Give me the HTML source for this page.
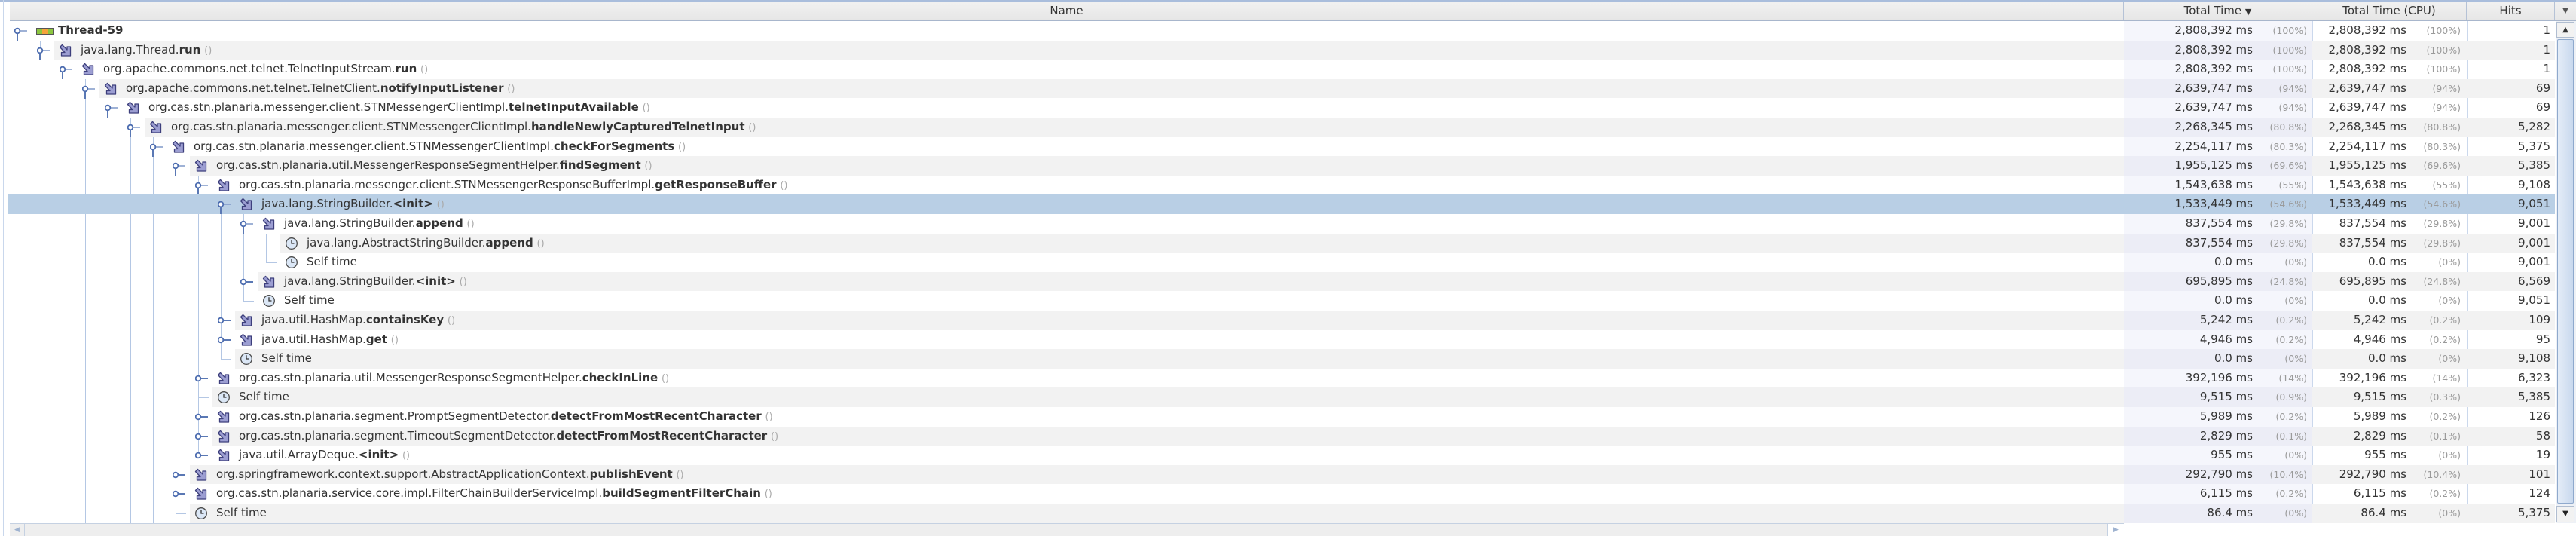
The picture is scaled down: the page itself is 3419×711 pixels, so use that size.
<!DOCTYPE html>
<html><head><meta charset="utf-8">
<style>
*{margin:0;padding:0;box-sizing:border-box}
html,body{width:3419px;height:711px;overflow:hidden;background:#fff;font-family:"DejaVu Sans","Liberation Sans",sans-serif;color:#333}
#top{position:absolute;left:0;top:0;width:3419px;height:2px;background:#a9bddc}
#lb{position:absolute;left:4px;top:0;width:1px;height:711px;background:#c9d7ec}
#hd{position:absolute;left:13px;top:2px;width:3406px;height:26px;background:linear-gradient(#f1f1f1,#e6e6e6);border-bottom:1px solid #a8b6cc;font-size:15px;color:#333}
#hd div{position:absolute;top:0;height:25px;line-height:25px;text-align:center;border-right:1px solid #b5c2d6}
.r{position:absolute;left:0;width:3392px;height:25.6px;line-height:25.6px;font-size:15px}
.r .bg{position:absolute;top:0;height:100%;right:573px}
.o .bg{background:#f2f2f2}
.c1,.c2,.c3{position:absolute;top:0;height:100%}
.c1{left:2819px;width:250px;background:#f5f6fc}
.c2{left:3069px;width:205px}
.c3{left:3274px;width:117px;text-align:right;padding-right:6px}
.o .c1{background:#ecedf6}
.o .c2,.o .c3{background:#f2f2f2}
.sel,.sel .c1,.sel .c2,.sel .c3{background:#b9cfe5!important}
.v{position:absolute;right:79px}
.c2 .v{right:80px}
.p{position:absolute;right:7px;font-size:12.5px;color:#9a9a9a}
.c2 .p{right:8px}
.ex{position:absolute;top:0;width:20px;height:26px}
.ic{position:absolute;top:4px;width:18px;height:18px}
.t{position:absolute;top:0;white-space:nowrap}
.t i{font-style:normal;color:#aaa;font-size:13px}
.vl{position:absolute;width:1px;background:#b4c7e4}
.hl{position:absolute;height:1px;background:#b4c7e4}
.cs{position:absolute;top:28px;height:665px;width:1px;background:#cbd8ec}
</style></head><body>
<svg width="0" height="0" style="position:absolute">
<defs>
<symbol id="eo" viewBox="0 0 20 26"><line x1="7" y1="13" x2="17" y2="13" stroke="#7f98c8" stroke-width="1.5"/><line x1="4" y1="16" x2="4" y2="26" stroke="#5a78b4" stroke-width="2"/><circle cx="4" cy="13" r="3.3" fill="#fff" stroke="#4d6db0" stroke-width="1.8"/></symbol>
<symbol id="ec" viewBox="0 0 20 26"><line x1="7" y1="13" x2="17" y2="13" stroke="#5a78b4" stroke-width="2"/><circle cx="4" cy="13" r="3.3" fill="#fff" stroke="#4d6db0" stroke-width="1.8"/></symbol>
<symbol id="mi" viewBox="0 0 18 18"><path d="M1.5 4.5 L4.5 1.5 L11 8 L11 4 L15.5 4 L15.5 16 L3.5 16 L3.5 11.5 L8 11.5 Z" fill="#9c9ed2" stroke="#3d3f7c" stroke-width="1.3" stroke-linejoin="round"/></symbol>
<symbol id="ck" viewBox="0 0 18 18"><circle cx="9" cy="9" r="7.3" fill="#dbe7f6" stroke="#4a4a4a" stroke-width="1.3"/><path d="M9 4.2 V9 H12.5" fill="none" stroke="#333" stroke-width="1.3"/></symbol>
</defs></svg>
<div id="top"></div><div id="lb"></div>
<div id="hd">
<div style="left:0;width:2806px">Name</div>
<div style="left:2806px;width:250px">Total Time <span style="font-size:11px">▼</span></div>
<div style="left:3056px;width:205px">Total Time (CPU)</div>
<div style="left:3261px;width:117px">Hits</div>
<div style="left:3378px;width:28px;border-right:none;font-size:10px;color:#555">▼</div>
</div>

<!-- tree lines -->
<div class="vl" style="left:53px;top:54px;height:13px"></div>
<div class="vl" style="left:83px;top:80px;height:614px"></div>
<div class="vl" style="left:113px;top:105px;height:589px"></div>
<div class="vl" style="left:143px;top:131px;height:563px"></div>
<div class="vl" style="left:173px;top:156px;height:538px"></div>
<div class="vl" style="left:203px;top:182px;height:512px"></div>
<div class="vl" style="left:233px;top:207px;height:474px"></div>
<div class="vl" style="left:263px;top:233px;height:371px"></div>
<div class="vl" style="left:293px;top:258px;height:218px"></div>
<div class="vl" style="left:323px;top:284px;height:115px"></div>
<div class="vl" style="left:353px;top:310px;height:38px"></div>
<div class="hl" style="left:353px;top:322px;width:14px"></div>
<div class="hl" style="left:353px;top:348px;width:14px"></div>
<div class="hl" style="left:323px;top:399px;width:14px"></div>
<div class="hl" style="left:293px;top:476px;width:14px"></div>
<div class="hl" style="left:263px;top:527px;width:14px"></div>
<div class="hl" style="left:233px;top:681px;width:14px"></div>

<div class="cs" style="left:2819px"></div>
<div class="cs" style="left:3069px"></div>
<div class="cs" style="left:3274px"></div>

<!-- rows -->
<div class="r" style="top:28px"><svg class="ex" style="left:19px"><use href="#eo"/></svg><svg class="ic" style="left:48px;top:9px;width:24px;height:9px" viewBox="0 0 24 9"><rect x="0.5" y="0.5" width="23" height="8" fill="#8cc63f" stroke="#555"/><rect x="8" y="1" width="8" height="7" fill="#f5a33a"/></svg><span class="t" style="left:77px"><b>Thread-59</b></span><div class="c1"><span class="v">2,808,392 ms</span><span class="p">(100%)</span></div><div class="c2"><span class="v">2,808,392 ms</span><span class="p">(100%)</span></div><div class="c3">1</div></div>

<div class="r o" style="top:53.6px"><div class="bg" style="left:72px"></div><svg class="ex" style="left:49px"><use href="#eo"/></svg><svg class="ic" style="left:78px"><use href="#mi"/></svg><span class="t" style="left:107px">java.lang.Thread.<b>run</b> <i>()</i></span><div class="c1"><span class="v">2,808,392 ms</span><span class="p">(100%)</span></div><div class="c2"><span class="v">2,808,392 ms</span><span class="p">(100%)</span></div><div class="c3">1</div></div>

<div class="r" style="top:79.2px"><svg class="ex" style="left:79px"><use href="#eo"/></svg><svg class="ic" style="left:108px"><use href="#mi"/></svg><span class="t" style="left:137px">org.apache.commons.net.telnet.TelnetInputStream.<b>run</b> <i>()</i></span><div class="c1"><span class="v">2,808,392 ms</span><span class="p">(100%)</span></div><div class="c2"><span class="v">2,808,392 ms</span><span class="p">(100%)</span></div><div class="c3">1</div></div>

<div class="r o" style="top:104.8px"><div class="bg" style="left:132px"></div><svg class="ex" style="left:109px"><use href="#eo"/></svg><svg class="ic" style="left:138px"><use href="#mi"/></svg><span class="t" style="left:167px">org.apache.commons.net.telnet.TelnetClient.<b>notifyInputListener</b> <i>()</i></span><div class="c1"><span class="v">2,639,747 ms</span><span class="p">(94%)</span></div><div class="c2"><span class="v">2,639,747 ms</span><span class="p">(94%)</span></div><div class="c3">69</div></div>

<div class="r" style="top:130.4px"><svg class="ex" style="left:139px"><use href="#eo"/></svg><svg class="ic" style="left:168px"><use href="#mi"/></svg><span class="t" style="left:197px">org.cas.stn.planaria.messenger.client.STNMessengerClientImpl.<b>telnetInputAvailable</b> <i>()</i></span><div class="c1"><span class="v">2,639,747 ms</span><span class="p">(94%)</span></div><div class="c2"><span class="v">2,639,747 ms</span><span class="p">(94%)</span></div><div class="c3">69</div></div>

<div class="r o" style="top:156px"><div class="bg" style="left:192px"></div><svg class="ex" style="left:169px"><use href="#eo"/></svg><svg class="ic" style="left:198px"><use href="#mi"/></svg><span class="t" style="left:227px">org.cas.stn.planaria.messenger.client.STNMessengerClientImpl.<b>handleNewlyCapturedTelnetInput</b> <i>()</i></span><div class="c1"><span class="v">2,268,345 ms</span><span class="p">(80.8%)</span></div><div class="c2"><span class="v">2,268,345 ms</span><span class="p">(80.8%)</span></div><div class="c3">5,282</div></div>

<div class="r" style="top:181.6px"><svg class="ex" style="left:199px"><use href="#eo"/></svg><svg class="ic" style="left:228px"><use href="#mi"/></svg><span class="t" style="left:257px">org.cas.stn.planaria.messenger.client.STNMessengerClientImpl.<b>checkForSegments</b> <i>()</i></span><div class="c1"><span class="v">2,254,117 ms</span><span class="p">(80.3%)</span></div><div class="c2"><span class="v">2,254,117 ms</span><span class="p">(80.3%)</span></div><div class="c3">5,375</div></div>

<div class="r o" style="top:207.2px"><div class="bg" style="left:252px"></div><svg class="ex" style="left:229px"><use href="#eo"/></svg><svg class="ic" style="left:258px"><use href="#mi"/></svg><span class="t" style="left:287px">org.cas.stn.planaria.util.MessengerResponseSegmentHelper.<b>findSegment</b> <i>()</i></span><div class="c1"><span class="v">1,955,125 ms</span><span class="p">(69.6%)</span></div><div class="c2"><span class="v">1,955,125 ms</span><span class="p">(69.6%)</span></div><div class="c3">5,385</div></div>

<div class="r" style="top:232.8px"><svg class="ex" style="left:259px"><use href="#eo"/></svg><svg class="ic" style="left:288px"><use href="#mi"/></svg><span class="t" style="left:317px">org.cas.stn.planaria.messenger.client.STNMessengerResponseBufferImpl.<b>getResponseBuffer</b> <i>()</i></span><div class="c1"><span class="v">1,543,638 ms</span><span class="p">(55%)</span></div><div class="c2"><span class="v">1,543,638 ms</span><span class="p">(55%)</span></div><div class="c3">9,108</div></div>

<div class="r sel" style="top:258.4px;left:11px;width:3380px"><svg class="ex" style="left:278px"><use href="#eo"/></svg><svg class="ic" style="left:307px"><use href="#mi"/></svg><span class="t" style="left:336px">java.lang.StringBuilder.<b>&lt;init&gt;</b> <i>()</i></span><div class="c1" style="left:2808px"><span class="v">1,533,449 ms</span><span class="p">(54.6%)</span></div><div class="c2" style="left:3058px"><span class="v">1,533,449 ms</span><span class="p">(54.6%)</span></div><div class="c3" style="left:3263px">9,051</div></div>

<div class="r" style="top:284px"><svg class="ex" style="left:319px"><use href="#eo"/></svg><svg class="ic" style="left:348px"><use href="#mi"/></svg><span class="t" style="left:377px">java.lang.StringBuilder.<b>append</b> <i>()</i></span><div class="c1"><span class="v">837,554 ms</span><span class="p">(29.8%)</span></div><div class="c2"><span class="v">837,554 ms</span><span class="p">(29.8%)</span></div><div class="c3">9,001</div></div>

<div class="r o" style="top:309.6px"><div class="bg" style="left:372px"></div><svg class="ic" style="left:378px"><use href="#ck"/></svg><span class="t" style="left:407px">java.lang.AbstractStringBuilder.<b>append</b> <i>()</i></span><div class="c1"><span class="v">837,554 ms</span><span class="p">(29.8%)</span></div><div class="c2"><span class="v">837,554 ms</span><span class="p">(29.8%)</span></div><div class="c3">9,001</div></div>

<div class="r" style="top:335.2px"><svg class="ic" style="left:378px"><use href="#ck"/></svg><span class="t" style="left:407px">Self time</span><div class="c1"><span class="v">0.0 ms</span><span class="p">(0%)</span></div><div class="c2"><span class="v">0.0 ms</span><span class="p">(0%)</span></div><div class="c3">9,001</div></div>

<div class="r o" style="top:360.8px"><div class="bg" style="left:342px"></div><svg class="ex" style="left:319px"><use href="#ec"/></svg><svg class="ic" style="left:348px"><use href="#mi"/></svg><span class="t" style="left:377px">java.lang.StringBuilder.<b>&lt;init&gt;</b> <i>()</i></span><div class="c1"><span class="v">695,895 ms</span><span class="p">(24.8%)</span></div><div class="c2"><span class="v">695,895 ms</span><span class="p">(24.8%)</span></div><div class="c3">6,569</div></div>

<div class="r" style="top:386.4px"><svg class="ic" style="left:348px"><use href="#ck"/></svg><span class="t" style="left:377px">Self time</span><div class="c1"><span class="v">0.0 ms</span><span class="p">(0%)</span></div><div class="c2"><span class="v">0.0 ms</span><span class="p">(0%)</span></div><div class="c3">9,051</div></div>

<div class="r o" style="top:412px"><div class="bg" style="left:312px"></div><svg class="ex" style="left:289px"><use href="#ec"/></svg><svg class="ic" style="left:318px"><use href="#mi"/></svg><span class="t" style="left:347px">java.util.HashMap.<b>containsKey</b> <i>()</i></span><div class="c1"><span class="v">5,242 ms</span><span class="p">(0.2%)</span></div><div class="c2"><span class="v">5,242 ms</span><span class="p">(0.2%)</span></div><div class="c3">109</div></div>

<div class="r" style="top:437.6px"><svg class="ex" style="left:289px"><use href="#ec"/></svg><svg class="ic" style="left:318px"><use href="#mi"/></svg><span class="t" style="left:347px">java.util.HashMap.<b>get</b> <i>()</i></span><div class="c1"><span class="v">4,946 ms</span><span class="p">(0.2%)</span></div><div class="c2"><span class="v">4,946 ms</span><span class="p">(0.2%)</span></div><div class="c3">95</div></div>

<div class="r o" style="top:463.2px"><div class="bg" style="left:312px"></div><svg class="ic" style="left:318px"><use href="#ck"/></svg><span class="t" style="left:347px">Self time</span><div class="c1"><span class="v">0.0 ms</span><span class="p">(0%)</span></div><div class="c2"><span class="v">0.0 ms</span><span class="p">(0%)</span></div><div class="c3">9,108</div></div>

<div class="r" style="top:488.8px"><svg class="ex" style="left:259px"><use href="#ec"/></svg><svg class="ic" style="left:288px"><use href="#mi"/></svg><span class="t" style="left:317px">org.cas.stn.planaria.util.MessengerResponseSegmentHelper.<b>checkInLine</b> <i>()</i></span><div class="c1"><span class="v">392,196 ms</span><span class="p">(14%)</span></div><div class="c2"><span class="v">392,196 ms</span><span class="p">(14%)</span></div><div class="c3">6,323</div></div>

<div class="r o" style="top:514.4px"><div class="bg" style="left:282px"></div><svg class="ic" style="left:288px"><use href="#ck"/></svg><span class="t" style="left:317px">Self time</span><div class="c1"><span class="v">9,515 ms</span><span class="p">(0.9%)</span></div><div class="c2"><span class="v">9,515 ms</span><span class="p">(0.3%)</span></div><div class="c3">5,385</div></div>

<div class="r" style="top:540px"><svg class="ex" style="left:259px"><use href="#ec"/></svg><svg class="ic" style="left:288px"><use href="#mi"/></svg><span class="t" style="left:317px">org.cas.stn.planaria.segment.PromptSegmentDetector.<b>detectFromMostRecentCharacter</b> <i>()</i></span><div class="c1"><span class="v">5,989 ms</span><span class="p">(0.2%)</span></div><div class="c2"><span class="v">5,989 ms</span><span class="p">(0.2%)</span></div><div class="c3">126</div></div>

<div class="r o" style="top:565.6px"><div class="bg" style="left:282px"></div><svg class="ex" style="left:259px"><use href="#ec"/></svg><svg class="ic" style="left:288px"><use href="#mi"/></svg><span class="t" style="left:317px">org.cas.stn.planaria.segment.TimeoutSegmentDetector.<b>detectFromMostRecentCharacter</b> <i>()</i></span><div class="c1"><span class="v">2,829 ms</span><span class="p">(0.1%)</span></div><div class="c2"><span class="v">2,829 ms</span><span class="p">(0.1%)</span></div><div class="c3">58</div></div>

<div class="r" style="top:591.2px"><svg class="ex" style="left:259px"><use href="#ec"/></svg><svg class="ic" style="left:288px"><use href="#mi"/></svg><span class="t" style="left:317px">java.util.ArrayDeque.<b>&lt;init&gt;</b> <i>()</i></span><div class="c1"><span class="v">955 ms</span><span class="p">(0%)</span></div><div class="c2"><span class="v">955 ms</span><span class="p">(0%)</span></div><div class="c3">19</div></div>

<div class="r o" style="top:616.8px"><div class="bg" style="left:252px"></div><svg class="ex" style="left:229px"><use href="#ec"/></svg><svg class="ic" style="left:258px"><use href="#mi"/></svg><span class="t" style="left:287px">org.springframework.context.support.AbstractApplicationContext.<b>publishEvent</b> <i>()</i></span><div class="c1"><span class="v">292,790 ms</span><span class="p">(10.4%)</span></div><div class="c2"><span class="v">292,790 ms</span><span class="p">(10.4%)</span></div><div class="c3">101</div></div>

<div class="r" style="top:642.4px"><svg class="ex" style="left:229px"><use href="#ec"/></svg><svg class="ic" style="left:258px"><use href="#mi"/></svg><span class="t" style="left:287px">org.cas.stn.planaria.service.core.impl.FilterChainBuilderServiceImpl.<b>buildSegmentFilterChain</b> <i>()</i></span><div class="c1"><span class="v">6,115 ms</span><span class="p">(0.2%)</span></div><div class="c2"><span class="v">6,115 ms</span><span class="p">(0.2%)</span></div><div class="c3">124</div></div>

<div class="r o" style="top:668px"><div class="bg" style="left:252px"></div><svg class="ic" style="left:258px"><use href="#ck"/></svg><span class="t" style="left:287px">Self time</span><div class="c1"><span class="v">86.4 ms</span><span class="p">(0%)</span></div><div class="c2"><span class="v">86.4 ms</span><span class="p">(0%)</span></div><div class="c3">5,375</div></div>

<!-- vertical scrollbar -->
<div style="position:absolute;left:3392px;top:28px;width:27px;height:666px;background:#eef1f6;border-left:1px solid #b5c4da"></div>
<div style="position:absolute;left:3393px;top:29px;width:24px;height:21px;background:#f2f2f2;border:1px solid #b0bdd0;font-size:10px;line-height:19px;text-align:center;color:#333">▲</div>
<div style="position:absolute;left:3394px;top:52px;width:22px;height:616px;background:linear-gradient(90deg,#e4ecf7,#c9d9ee);border:1px solid #8fa9cd;border-radius:2px"></div>
<div style="position:absolute;left:3393px;top:671px;width:24px;height:22px;background:#f2f2f2;border:1px solid #b0bdd0;font-size:10px;line-height:20px;text-align:center;color:#222">▼</div>
<!-- horizontal scrollbar -->
<div style="position:absolute;left:13px;top:694px;width:2806px;height:17px;background:#eeeeee;border-top:1px solid #c5d1e2"></div>
<div style="position:absolute;left:13px;top:695px;width:20px;height:16px;border-right:1px solid #c5d1e2;font-size:9px;line-height:16px;text-align:center;color:#9fb3d0">◀</div>
<div style="position:absolute;left:2797px;top:695px;width:22px;height:16px;border-left:1px solid #c5d1e2;font-size:9px;line-height:16px;text-align:center;color:#9fb3d0;background:#fff">▶</div>
</body></html>
